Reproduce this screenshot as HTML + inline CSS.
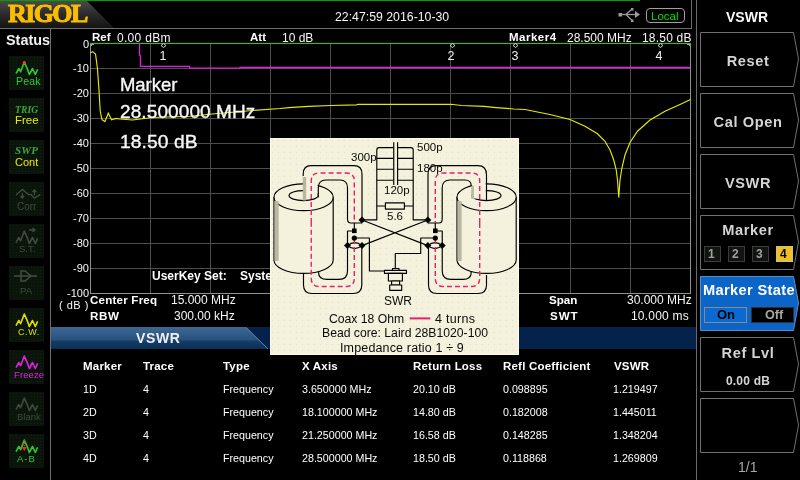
<!DOCTYPE html>
<html><head><meta charset="utf-8"><style>
html,body{margin:0;padding:0}
body{width:800px;height:480px;background:#000;overflow:hidden;position:relative;font-family:"Liberation Sans",sans-serif;color:#fff}
.a{position:absolute;white-space:nowrap;line-height:1;will-change:transform}
.b{font-weight:bold}
svg{position:absolute;left:0;top:0}
.sb{position:absolute;left:9px;width:35px;height:34px;background-color:#0a140a;background-image:radial-gradient(circle,#102010 0.6px,transparent 0.8px);background-size:3px 3px}
.sk{position:absolute;left:700px;width:99px;height:54px}
.skt{position:absolute;left:0;width:96px;text-align:center;color:#d4d4d4;font-weight:bold;font-size:14.6px;letter-spacing:0.6px}
.th{font-weight:bold;font-size:11.5px;letter-spacing:0.2px}
.td{font-size:10.7px}
</style></head><body>

<!-- ===== TOP BAR ===== -->
<div class="a" style="left:0;top:0;width:640px;height:1px;background:#00a000"></div>
<svg width="800" height="480" style="z-index:1">
  <defs>
    <linearGradient id="lg" x1="0" y1="0" x2="0" y2="1">
      <stop offset="0" stop-color="#4a4a4a"/><stop offset="0.5" stop-color="#2a2a2a"/><stop offset="1" stop-color="#141414"/>
    </linearGradient>
  </defs>
  <polygon points="0,1 87,1 114,28 0,28" fill="url(#lg)"/>
  <rect x="0" y="28" width="692" height="1" fill="#6e6e6e"/>
  <rect x="691" y="0" width="1" height="28" fill="#6e6e6e"/>
  <rect x="696" y="0" width="1" height="480" fill="#6a6a6a"/>
  <rect x="50" y="29" width="1" height="451" fill="#6e6e6e"/>
</svg>
<div class="a" style="left:7.5px;top:1px;font-family:'Liberation Serif',serif;font-weight:bold;font-size:26px;color:#fbbd00;z-index:2;letter-spacing:-1.6px;-webkit-text-stroke:1px #fbbd00">RIGOL</div>
<div class="a" style="left:335px;top:11px;font-size:12.3px;color:#f6f6f6;z-index:2">22:47:59 2016-10-30</div>
<svg width="800" height="480" style="z-index:2">
  <g stroke="#9a9a9a" stroke-width="1.3" fill="none">
    <line x1="621" y1="14.5" x2="637" y2="14.5"/>
    <path d="M626,14.5 L631.5,9.5"/>
    <path d="M626,14.5 L631.5,20"/>
  </g>
  <polygon points="635,11 640,14.5 635,18" fill="#9a9a9a"/>
  <rect x="618.5" y="13" width="3.5" height="3.5" fill="#9a9a9a"/>
  <rect x="631" y="8" width="2.5" height="2.5" fill="#9a9a9a"/>
  <rect x="631" y="19.5" width="2.5" height="2.5" fill="#9a9a9a"/>
  <rect x="646.5" y="8.5" width="38" height="14" rx="3.5" fill="none" stroke="#a0a0a0" stroke-width="1"/>
</svg>
<div class="a" style="left:651px;top:11px;font-size:11.5px;color:#00e000;z-index:3">Local</div>

<!-- ===== STATUS ===== -->
<div class="a b" style="left:6px;top:33px;font-size:14.4px;color:#f0f0f0">Status</div>
<div class="sb" style="top:56px"></div>
<div class="sb" style="top:98px"></div>
<div class="sb" style="top:140px"></div>
<div class="sb" style="top:182px"></div>
<div class="sb" style="top:224px"></div>
<div class="sb" style="top:266px"></div>
<div class="sb" style="top:308px"></div>
<div class="sb" style="top:350px"></div>
<div class="sb" style="top:392px"></div>
<div class="sb" style="top:434px"></div>
<svg width="800" height="480" style="z-index:3">
  <defs>
    <path id="wv" d="M7,17.6 L9.8,12.5 L11.6,15.7 L15.3,6.1 L18,12.1 L20.3,18.5 L23.5,12.5 L26.3,18.5 L28.6,13.4" fill="none" stroke-width="1.6" stroke-linejoin="round"/>
  </defs>
  <g transform="translate(9,56)"><use href="#wv" stroke="#30c830"/><circle cx="15.3" cy="6.5" r="1.6" fill="#ff3030"/></g>
  <g transform="translate(9,266)" stroke="#3e4c3e" stroke-width="1.6" fill="none"><line x1="5" y1="10" x2="28" y2="10"/><path d="M12,5 H16 L22,10 L16,15 H12 Z"/></g>
  <g transform="translate(9,182)" stroke="#3e4c3e" stroke-width="1.4" fill="none"><path d="M7,13 L13.4,7.5 L19.4,12.5 H22 L25.4,16.2 L31.3,12.3"/><path d="M13.4,11 V16 M11.5,14 L13.4,16 L15.3,14 M25.4,13 V8 M23.5,10 L25.4,8 L27.3,10"/></g>
  <g transform="translate(9,224)" stroke="#3e4c3e" stroke-width="1.4" fill="none"><use href="#wv" stroke="#3e4c3e" transform="translate(0,1)"/><path d="M20,6 H26 M23.5,4 L26,6 L23.5,8"/></g>
  <g transform="translate(9,308)"><use href="#wv" stroke="#e0e000"/></g>
  <g transform="translate(9,350)"><use href="#wv" stroke="#e020e0"/></g>
  <g transform="translate(9,392)"><use href="#wv" stroke="#3c4c3c"/></g>
  <g transform="translate(9,434)"><use href="#wv" stroke="#30c830"/><path d="M15.3,6 V15" stroke="#ff2020" stroke-width="1.2" stroke-dasharray="1.5 1"/><polygon points="12.5,13 18,13 15.3,17" fill="#ff2020"/></g>
</svg>
<div class="a" style="left:16px;top:76px;font-size:10.5px;color:#30c830;z-index:3;letter-spacing:0.2px">Peak</div>
<div class="a" style="left:15px;top:104.5px;font-family:'Liberation Serif',serif;font-style:italic;font-weight:bold;font-size:9.6px;color:#3aa83a;z-index:3;letter-spacing:0.1px">TRIG</div>
<div class="a" style="left:15px;top:114.5px;font-size:11.5px;color:#e8e800;z-index:3">Free</div>
<div class="a" style="left:15px;top:144.5px;font-family:'Liberation Serif',serif;font-style:italic;font-weight:bold;font-size:11px;color:#3aa83a;z-index:3;letter-spacing:0.2px">SWP</div>
<div class="a" style="left:15px;top:156.5px;font-size:11px;color:#e8e800;z-index:3">Cont</div>
<div class="a" style="left:17px;top:201.5px;font-size:10px;color:#3e4c3e;z-index:3">Corr</div>
<div class="a" style="left:19px;top:243.5px;font-size:9.5px;color:#3e4c3e;z-index:3">S.T.</div>
<div class="a" style="left:20px;top:285.5px;font-size:9.5px;color:#3e4c3e;z-index:3">PA</div>
<div class="a" style="left:17.5px;top:328px;font-size:9px;color:#e0e000;z-index:3;letter-spacing:0.6px">C.W.</div>
<div class="a" style="left:13.5px;top:370px;font-size:9.5px;color:#e020e0;z-index:3;letter-spacing:0.1px">Freeze</div>
<div class="a" style="left:16.5px;top:412px;font-size:9.5px;color:#3c4c3c;z-index:3">Blank</div>
<div class="a" style="left:16.5px;top:454px;font-size:9.5px;color:#30c830;z-index:3;letter-spacing:1px">A-B</div>

<!-- ===== GRAPH ===== -->
<svg width="800" height="480" style="z-index:4" shape-rendering="crispEdges">
<rect x="150" y="43" width="1" height="250" fill="#4b4f4b"/>
<rect x="210" y="43" width="1" height="250" fill="#4b4f4b"/>
<rect x="270" y="43" width="1" height="250" fill="#4b4f4b"/>
<rect x="330" y="43" width="1" height="250" fill="#4b4f4b"/>
<rect x="390" y="43" width="1" height="250" fill="#4b4f4b"/>
<rect x="450" y="43" width="1" height="250" fill="#4b4f4b"/>
<rect x="510" y="43" width="1" height="250" fill="#4b4f4b"/>
<rect x="570" y="43" width="1" height="250" fill="#4b4f4b"/>
<rect x="630" y="43" width="1" height="250" fill="#4b4f4b"/>
<rect x="90" y="68" width="601" height="1" fill="#4b4f4b"/>
<rect x="90" y="93" width="601" height="1" fill="#4b4f4b"/>
<rect x="90" y="118" width="601" height="1" fill="#4b4f4b"/>
<rect x="90" y="143" width="601" height="1" fill="#4b4f4b"/>
<rect x="90" y="168" width="601" height="1" fill="#4b4f4b"/>
<rect x="90" y="193" width="601" height="1" fill="#4b4f4b"/>
<rect x="90" y="218" width="601" height="1" fill="#4b4f4b"/>
<rect x="90" y="243" width="601" height="1" fill="#4b4f4b"/>
<rect x="90" y="268" width="601" height="1" fill="#4b4f4b"/>
<rect x="90" y="43" width="1" height="251" fill="#909090"/>
<rect x="690" y="43" width="1" height="251" fill="#909090"/>
<rect x="90" y="293" width="601" height="1" fill="#909090"/>
<rect x="90" y="43" width="601" height="1" fill="#00e000"/>
<polygon points="91,44 95,44 91,46" fill="#a8a0a8"/>
<polygon points="686,44 690,44 690,46" fill="#a8a0a8"/>
</svg>
<svg width="800" height="480" style="z-index:5">
  <polyline fill="none" stroke="#e020e0" stroke-width="1.3" points="139.5,44 139.5,55 140.5,56 140.5,66.3 189.5,66.3 189.5,68.2 240,68.2 240,67.5 690,67.5"/>
  <polyline fill="none" stroke="#e8e800" stroke-width="1.15" points="90.3,53 92.7,51.6 95.5,54 97.4,68 98.9,88.8 100.2,111 102,119.7 104.9,121.6 108.3,113.2 111.5,119.7 116,118.4 120,119 132.5,120 152.5,117.5 190,116.25 215,113.75 252.5,110.5 280,108.5 289,107.6 308.5,106.4 331,105.5 356.5,104.9 358,104.3 391,104.3 451,104.3 461.5,105.5 484,106.4 496,107.6 514,109 525,109.5 550,114.5 570,119.5 585,126.25 597.5,133.75 605,141.25 610,150 613.75,160 616.25,170 617.5,180 618.75,197.5 620,180 622,167.5 625,155 630,142.5 637.5,131.25 650,120 665,111.25 680,104.5 690.5,99.5"/>
  <g fill="none" stroke="#d8d8d8" stroke-width="1">
    <path d="M163.5,43.5 L166,45.5 L163.5,47.5 L161,45.5 Z"/>
    <path d="M452.5,43.5 L455,45.5 L452.5,47.5 L450,45.5 Z"/>
    <path d="M515.5,43.5 L518,45.5 L515.5,47.5 L513,45.5 Z"/>
    <path d="M660.5,43.5 L663,45.5 L660.5,47.5 L658,45.5 Z"/>
  </g>
</svg>
<div class="a" style="z-index:6;left:92px;top:32.3px;font-size:11.5px;font-weight:bold">Ref</div>
<div class="a" style="z-index:6;left:116.5px;top:32.3px;font-size:12px;color:#f6f6f6;letter-spacing:0.3px">0.00 dBm</div>
<div class="a" style="z-index:6;left:250px;top:32.3px;font-size:11.5px;font-weight:bold">Att</div>
<div class="a" style="z-index:6;left:282px;top:32.3px;font-size:12px;color:#f6f6f6">10 dB</div>
<div class="a" style="z-index:6;left:509px;top:32.3px;font-size:11.5px;font-weight:bold;letter-spacing:0.5px">Marker4</div>
<div class="a" style="z-index:6;left:567px;top:32.3px;font-size:12px;color:#f6f6f6">28.500 MHz</div>
<div class="a" style="z-index:6;left:642px;top:32.3px;font-size:12px;color:#f6f6f6;letter-spacing:0.2px">18.50 dB</div>
<div class="a" style="z-index:6;left:152.5px;width:20px;text-align:center;top:49.8px;font-size:12.5px;color:#f0f0f0">1</div>
<div class="a" style="z-index:6;left:441.3px;width:20px;text-align:center;top:49.8px;font-size:12.5px;color:#f0f0f0">2</div>
<div class="a" style="z-index:6;left:504.5px;width:20px;text-align:center;top:49.8px;font-size:12.5px;color:#f0f0f0">3</div>
<div class="a" style="z-index:6;left:649px;width:20px;text-align:center;top:49.8px;font-size:12.5px;color:#f0f0f0">4</div>
<div class="a" style="z-index:6;right:711px;top:39px;font-size:11px;color:#f6f6f6;text-align:right">0</div>
<div class="a" style="z-index:6;right:711px;top:63px;font-size:11px;color:#f6f6f6">-10</div>
<div class="a" style="z-index:6;right:711px;top:88px;font-size:11px;color:#f6f6f6">-20</div>
<div class="a" style="z-index:6;right:711px;top:113px;font-size:11px;color:#f6f6f6">-30</div>
<div class="a" style="z-index:6;right:711px;top:138px;font-size:11px;color:#f6f6f6">-40</div>
<div class="a" style="z-index:6;right:711px;top:163px;font-size:11px;color:#f6f6f6">-50</div>
<div class="a" style="z-index:6;right:711px;top:188px;font-size:11px;color:#f6f6f6">-60</div>
<div class="a" style="z-index:6;right:711px;top:213px;font-size:11px;color:#f6f6f6">-70</div>
<div class="a" style="z-index:6;right:711px;top:238px;font-size:11px;color:#f6f6f6">-80</div>
<div class="a" style="z-index:6;right:711px;top:263px;font-size:11px;color:#f6f6f6">-90</div>
<div class="a" style="z-index:6;right:711px;top:288px;font-size:11px;color:#f6f6f6">-100</div>
<div class="a" style="z-index:6;left:59px;top:300px;font-size:11px;color:#f6f6f6;letter-spacing:0.5px">( dB )</div>

<div class="a" style="z-index:6;left:119.5px;top:76px;font-size:18.5px;color:#f8f8f8;letter-spacing:-0.05px;-webkit-text-stroke:0.35px #f8f8f8">Marker</div>
<div class="a" style="z-index:6;left:119.5px;top:102px;font-size:19px;color:#f8f8f8;letter-spacing:0.1px;-webkit-text-stroke:0.35px #f8f8f8">28.500000 MHz</div>
<div class="a" style="z-index:6;left:119.5px;top:131.5px;font-size:19.2px;color:#f8f8f8;letter-spacing:0.1px;-webkit-text-stroke:0.35px #f8f8f8">18.50 dB</div>

<div class="a" style="z-index:6;left:152px;top:269.5px;font-size:12px;font-weight:bold">UserKey Set:</div>
<div class="a" style="z-index:6;left:240px;top:269.5px;font-size:12px;font-weight:bold">System</div>

<div class="a" style="z-index:6;left:90px;top:294px;font-size:11.6px;font-weight:bold;letter-spacing:0.2px">Center Freq</div>
<div class="a" style="z-index:6;left:171px;top:294px;font-size:12px;color:#f6f6f6">15.000 MHz</div>
<div class="a" style="z-index:6;left:90px;top:310px;font-size:11.6px;font-weight:bold;letter-spacing:0.6px">RBW</div>
<div class="a" style="z-index:6;left:174px;top:310px;font-size:12px;color:#f6f6f6">300.00 kHz</div>
<div class="a" style="z-index:6;left:549px;top:294px;font-size:11.6px;font-weight:bold">Span</div>
<div class="a" style="z-index:6;left:626.5px;top:294px;font-size:12px;color:#f6f6f6">30.000 MHz</div>
<div class="a" style="z-index:6;left:549.5px;top:310px;font-size:11.6px;font-weight:bold;letter-spacing:0.9px">SWT</div>
<div class="a" style="z-index:6;left:631px;top:310px;font-size:12px;color:#f6f6f6;letter-spacing:0.2px">10.000 ms</div>

<!-- ===== VSWR BAR ===== -->
<svg width="800" height="480" style="z-index:7">
  <defs>
    <linearGradient id="tb" x1="0" y1="0" x2="0" y2="1">
      <stop offset="0" stop-color="#3c6994"/><stop offset="0.6" stop-color="#28517b"/><stop offset="0.63" stop-color="#143c68"/><stop offset="1" stop-color="#0c2f58"/>
    </linearGradient>
  </defs>
  <rect x="51" y="327" width="645" height="22" fill="#05234a"/>
  <polygon points="51,327 246,327 268,349 51,349" fill="url(#tb)"/>
  <line x1="246" y1="327.5" x2="268" y2="349" stroke="#5a86b0" stroke-width="1"/>
</svg>
<div class="a b" style="z-index:8;left:136px;top:330.5px;font-size:14px;color:#f0f0f0;letter-spacing:0.6px">VSWR</div>

<!-- ===== TABLE ===== -->
<div class="a th" style="z-index:8;left:83px;top:361px">Marker</div>
<div class="a th" style="z-index:8;left:143px;top:361px">Trace</div>
<div class="a th" style="z-index:8;left:223px;top:361px">Type</div>
<div class="a th" style="z-index:8;left:302px;top:361px">X Axis</div>
<div class="a th" style="z-index:8;left:413px;top:361px">Return Loss</div>
<div class="a th" style="z-index:8;left:503px;top:361px">Refl Coefficient</div>
<div class="a th" style="z-index:8;left:614px;top:361px">VSWR</div>

<div class="a td" style="z-index:8;left:83px;top:384px">1D</div>
<div class="a td" style="z-index:8;left:143px;top:384px">4</div>
<div class="a td" style="z-index:8;left:223px;top:384px">Frequency</div>
<div class="a td" style="z-index:8;left:302px;top:384px">3.650000 MHz</div>
<div class="a td" style="z-index:8;left:413px;top:384px">20.10 dB</div>
<div class="a td" style="z-index:8;left:503px;top:384px">0.098895</div>
<div class="a td" style="z-index:8;left:613px;top:384px">1.219497</div>

<div class="a td" style="z-index:8;left:83px;top:407px">2D</div>
<div class="a td" style="z-index:8;left:143px;top:407px">4</div>
<div class="a td" style="z-index:8;left:223px;top:407px">Frequency</div>
<div class="a td" style="z-index:8;left:302px;top:407px">18.100000 MHz</div>
<div class="a td" style="z-index:8;left:413px;top:407px">14.80 dB</div>
<div class="a td" style="z-index:8;left:503px;top:407px">0.182008</div>
<div class="a td" style="z-index:8;left:613px;top:407px">1.445011</div>

<div class="a td" style="z-index:8;left:83px;top:430px">3D</div>
<div class="a td" style="z-index:8;left:143px;top:430px">4</div>
<div class="a td" style="z-index:8;left:223px;top:430px">Frequency</div>
<div class="a td" style="z-index:8;left:302px;top:430px">21.250000 MHz</div>
<div class="a td" style="z-index:8;left:413px;top:430px">16.58 dB</div>
<div class="a td" style="z-index:8;left:503px;top:430px">0.148285</div>
<div class="a td" style="z-index:8;left:613px;top:430px">1.348204</div>

<div class="a td" style="z-index:8;left:83px;top:453px">4D</div>
<div class="a td" style="z-index:8;left:143px;top:453px">4</div>
<div class="a td" style="z-index:8;left:223px;top:453px">Frequency</div>
<div class="a td" style="z-index:8;left:302px;top:453px">28.500000 MHz</div>
<div class="a td" style="z-index:8;left:413px;top:453px">18.50 dB</div>
<div class="a td" style="z-index:8;left:503px;top:453px">0.118868</div>
<div class="a td" style="z-index:8;left:613px;top:453px">1.269809</div>

<!-- ===== RIGHT PANEL ===== -->
<div class="a b" style="z-index:8;left:726px;top:10px;font-size:14px;color:#f8f8f8">VSWR</div>
<svg width="800" height="480" style="z-index:8">
  <g fill="none" stroke="#707070" stroke-width="1">
    <path d="M700.5,32.5 H793.5 L798.5,59 L793.5,86.5 H700.5 Z"/>
    <path d="M700.5,93.5 H793.5 L798.5,120 L793.5,147.5 H700.5 Z"/>
    <path d="M700.5,154.5 H793.5 L798.5,181 L793.5,208.5 H700.5 Z"/>
    <path d="M700.5,215.5 H793.5 L798.5,242 L793.5,269.5 H700.5 Z"/>
    <path d="M700.5,337.5 H793.5 L798.5,364 L793.5,391.5 H700.5 Z"/>
    <path d="M700.5,398.5 H793.5 L798.5,425 L793.5,452.5 H700.5 Z"/>
  </g>
  <path d="M700.5,276.5 H793.5 L798.5,303 L793.5,330.5 H700.5 Z" fill="#0b64c8" stroke="#5c8cc0" stroke-width="1"/>
  <rect x="704.5" y="246.5" width="16" height="15" fill="#121412" stroke="#3c3c3c"/>
  <rect x="728.5" y="246.5" width="16" height="15" fill="#121412" stroke="#3c3c3c"/>
  <rect x="752.5" y="246.5" width="16" height="15" fill="#121412" stroke="#3c3c3c"/>
  <rect x="776.5" y="246.5" width="16" height="15" fill="#f0c020" stroke="#c8c090"/>
  <rect x="704.5" y="307.5" width="42" height="15" fill="#0a6ad0" stroke="#8a8a8a"/>
  <rect x="751.5" y="307.5" width="42" height="15" fill="#000" stroke="#303030"/>
</svg>
<div class="a skt" style="z-index:9;left:700px;top:54px">Reset</div>
<div class="a skt" style="z-index:9;left:700px;top:115px">Cal Open</div>
<div class="a skt" style="z-index:9;left:700px;top:176px">VSWR</div>
<div class="a skt" style="z-index:9;left:700px;top:223px">Marker</div>
<div class="a" style="z-index:9;left:708px;top:248px;font-size:12px;color:#a0a0a0;font-weight:bold">1</div>
<div class="a" style="z-index:9;left:732px;top:248px;font-size:12px;color:#a0a0a0;font-weight:bold">2</div>
<div class="a" style="z-index:9;left:756px;top:248px;font-size:12px;color:#a0a0a0;font-weight:bold">3</div>
<div class="a" style="z-index:9;left:780px;top:248px;font-size:12px;color:#000;font-weight:bold">4</div>
<div class="a skt" style="z-index:9;left:700px;top:283px;color:#fff;letter-spacing:0.35px;width:98px">Marker State</div>
<div class="a" style="z-index:9;left:717px;top:308px;font-size:13px;color:#000;font-weight:bold">On</div>
<div class="a" style="z-index:9;left:765px;top:308.5px;font-size:12.6px;color:#a8a8a8;font-weight:bold">Off</div>
<div class="a skt" style="z-index:9;left:700px;top:346px">Ref Lvl</div>
<div class="a skt" style="z-index:9;left:700px;top:375px;font-size:12px;letter-spacing:0.2px">0.00 dB</div>
<div class="a" style="z-index:9;left:738px;top:460px;font-size:14px;color:#a8a8a8">1/1</div>

<!-- ===== DIAGRAM OVERLAY ===== -->
<svg width="800" height="480" style="z-index:21">
  <defs>
    <pattern id="dots" x="270" y="138" width="6" height="6" patternUnits="userSpaceOnUse">
      <rect x="2" y="2" width="1" height="1" fill="#e2dfcc"/>
    </pattern>
  </defs>
  <rect x="270" y="138" width="249" height="217" fill="#f4f1dc"/>
  <rect x="270" y="138" width="249" height="217" fill="url(#dots)"/>
  <rect x="270.5" y="138.5" width="248" height="216" fill="none" stroke="#fdfce6" stroke-width="1"/>
  <!-- left toroid -->
  <g stroke="#000" stroke-width="1.15" fill="#f4f1dc">
    <path d="M274,197 V260 A29.6,13.4 0 0 0 333.2,260 V197"/>
    <ellipse cx="303.6" cy="197.2" rx="29.6" ry="13.4"/>
    <ellipse cx="303.5" cy="195.6" rx="14.5" ry="5"/>
  </g>
  <rect x="304" y="170" width="13.6" height="26.5" fill="#f4f1dc"/>
  <rect x="274.6" y="201" width="4" height="60" fill="#b9b7a0"/>
  <rect x="302.8" y="177" width="3.4" height="23.5" fill="#b9b7a0"/>
  <!-- right toroid -->
  <g stroke="#000" stroke-width="1.15" fill="#f4f1dc">
    <path d="M457,197 V260 A29.6,13.4 0 0 0 516.2,260 V197"/>
    <ellipse cx="486.6" cy="197.2" rx="29.6" ry="13.4"/>
    <ellipse cx="486.5" cy="195.6" rx="14.5" ry="5"/>
  </g>
  <rect x="472" y="170" width="13.8" height="28.5" fill="#f4f1dc"/>
  <rect x="457.6" y="201" width="4" height="60" fill="#b9b7a0"/>
  <rect x="471.25" y="185.6" width="2.6" height="13.2" fill="#b9b7a0"/>
  <!-- wires -->
  <g stroke="#000" stroke-width="1.15" fill="none" stroke-linejoin="round">
    <!-- left top outer -->
    <path d="M303.2,176 V174 Q303.2,165.6 311,165.6 H354 Q362,165.6 362,174 V220"/>
    <!-- left top inner -->
    <path d="M318.3,197.5 V188 Q318.3,180 326,180 H340 Q347.5,180 347.5,188 V219 Q347.5,223 351,223 H362"/>
    <!-- left bottom outer -->
    <path d="M303.5,273 V285 Q303.5,293.5 312,293.5 H353 Q361.8,293.5 361.8,285 V245.6"/>
    <!-- left bottom inner -->
    <path d="M318.5,271.9 Q318.5,279.4 327,279.4 H339 Q347.5,279.4 347.5,271 V231 H354.3 V223"/>
    <path d="M354.3,238 H369.4 V271 H385"/>
    <path d="M347.5,245.6 Q354.7,239.5 362,245.6 Q354.7,251.5 347.5,245.6"/>
    <!-- right top outer -->
    <path d="M486.5,200.3 V175 Q486.5,165.6 478,165.6 H436 Q428,165.6 428,174 V220"/>
    <!-- right top inner -->
    <path d="M471.25,186 Q471.25,180 465,180 H450 Q442.2,180 442.2,188 V219 Q442.2,223 439,223 H428"/>
    <!-- right bottom outer -->
    <path d="M486.5,275 V285 Q486.5,293.5 478,293.5 H437 Q428.5,293.5 428.5,285 V245.6"/>
    <!-- right bottom inner -->
    <path d="M471.25,271.9 Q471.25,279.4 463,279.4 H451 Q442.25,279.4 442.25,271 V231 H435.3 V223"/>
    <path d="M435.3,238 H420.7 V253.5 H395.3 V269"/>
    <path d="M427.75,245.6 Q435,239.5 442.25,245.6 Q435,251.5 427.75,245.6"/>
  <!-- cross -->
    <path d="M362,220 L427.8,245.6 M427.8,220 L362,245.6"/>
    <!-- cap bank -->
    <path d="M362,219.8 H376.8 V150 Q376.8,147.6 379,147.6 H393.75 M397.6,147.6 H411 Q413.2,147.6 413.2,150 V219.8 H427.8"/>
    <path d="M376.8,158.3 H393.75 M376.8,169.25 H393.75 M376.8,180.2 H393.75 M397.6,158.3 H413.2 M397.6,169.25 H413.2 M397.6,180.2 H413.2"/>
    <path d="M393.75,142.2 V185 M397.6,142.2 V185"/>
    <path d="M376.8,206 H385.4 M404.4,206 H413.2"/>
    <rect x="385.4" y="202.8" width="19" height="6.3" fill="#f4f1dc"/>
    <!-- connector -->
    <rect x="392.5" y="268.5" width="6.5" height="2" fill="#f4f1dc"/>
    <rect x="384.5" y="270.4" width="22" height="3" fill="#f4f1dc"/>
    <rect x="388.4" y="273.4" width="14" height="7.6" fill="#f4f1dc"/>
    <rect x="391.6" y="281" width="8" height="4" fill="#f4f1dc"/>
    <rect x="389.7" y="285" width="12" height="5.3" fill="#f4f1dc"/>
  </g>
  <!-- pink dashed loops -->
  <g stroke="#e8206a" stroke-width="1.4" fill="none" stroke-dasharray="5 3">
    <path d="M311.25,223 V181 Q311.25,173 319,173 H346.5 Q354.3,173 354.3,181 V223"/>
    <path d="M354.3,239 V278 Q354.3,286.5 346.5,286.5 H319 Q311.25,286.5 311.25,278 V223"/>
    <path d="M479.7,223 V181 Q479.7,173 471.5,173 H443 Q435.3,173 435.3,181 V223"/>
    <path d="M435.3,239 V278 Q435.3,286.5 443,286.5 H471.5 Q479.7,286.5 479.7,278 V223"/>
  </g>
  <!-- dots -->
  <g fill="#000">
    <path d="M362,216.5 L365.5,220 L362,223.5 L358.5,220 Z"/>
    <path d="M427.8,216.5 L431.3,220 L427.8,223.5 L424.3,220 Z"/>
    <rect x="352" y="228.5" width="4.6" height="4.6"/>
    <rect x="433" y="228.5" width="4.6" height="4.6"/>
    <circle cx="354.3" cy="238.1" r="2.6"/>
    <circle cx="435.3" cy="238.1" r="2.6"/>
    <path d="M347.5,242.1 L351,245.6 L347.5,249.1 L344,245.6 Z"/>
    <path d="M362,242.1 L365.5,245.6 L362,249.1 L358.5,245.6 Z"/>
    <path d="M427.8,242.1 L431.3,245.6 L427.8,249.1 L424.3,245.6 Z"/>
    <path d="M442.2,242.1 L445.7,245.6 L442.2,249.1 L438.7,245.6 Z"/>
  </g>
  <line x1="409.7" y1="318.4" x2="430.3" y2="318.4" stroke="#e8206a" stroke-width="2"/>
</svg>
<div class="a" style="z-index:22;left:351px;top:152px;font-size:11.5px;color:#0a0a0a">300p</div>
<div class="a" style="z-index:22;left:417px;top:142px;font-size:11.5px;color:#0a0a0a">500p</div>
<div class="a" style="z-index:22;left:417px;top:163px;font-size:11.5px;color:#0a0a0a">180p</div>
<div class="a" style="z-index:22;left:384px;top:185px;font-size:11.5px;color:#0a0a0a">120p</div>
<div class="a" style="z-index:22;left:387px;top:211px;font-size:11.5px;color:#0a0a0a">5.6</div>
<div class="a" style="z-index:22;left:384px;top:295px;font-size:12px;color:#0a0a0a">SWR</div>
<div class="a" style="z-index:22;left:329px;top:313px;font-size:12.2px;color:#0a0a0a">Coax 18 Ohm</div>
<div class="a" style="z-index:22;left:434.5px;top:313px;font-size:12.5px;color:#0a0a0a;letter-spacing:0.3px">4 turns</div>
<div class="a" style="z-index:22;left:322px;top:327px;font-size:12.2px;color:#0a0a0a">Bead core: Laird 28B1020-100</div>
<div class="a" style="z-index:22;left:340px;top:342px;font-size:12.5px;color:#0a0a0a;letter-spacing:0.15px">Impedance ratio 1 ÷ 9</div>

</body></html>
